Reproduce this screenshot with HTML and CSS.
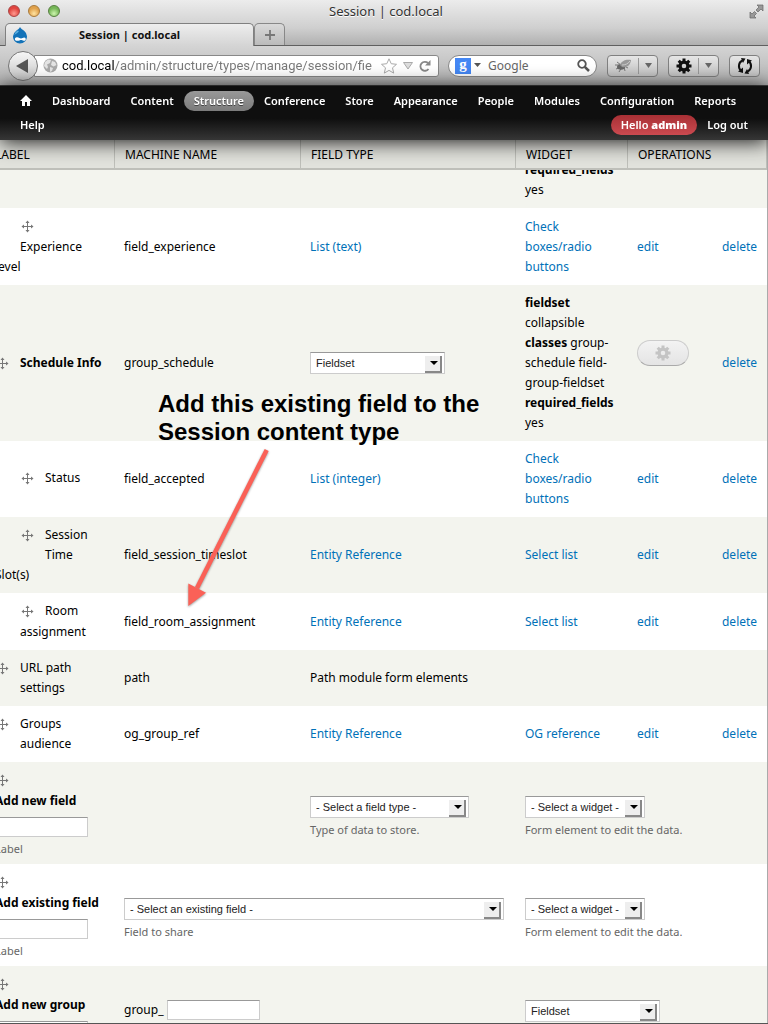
FILE: index.html
```html
<!DOCTYPE html>
<html lang="en">
<head>
<meta charset="utf-8">
<title>Session | cod.local</title>
<link rel="stylesheet" href="styles.css">
</head>
<body>
<svg class="defs" width="0" height="0" aria-hidden="true">
  <symbol id="move" viewBox="0 0 13 13"><path d="M6.5 1v11M1 6.5h11" stroke="#777" fill="none"/><path d="M4.5 3 6.500 .5 8.500 3zM4.500 10 6.500 12.500 8.500 10zM3 4.500.5 6.500 3 8.500zM10 4.500 12.500 6.500 10 8.500z" fill="#777"/></symbol>
  <symbol id="gear" viewBox="0 0 16 16"><g fill="currentColor"><path fill-rule="evenodd" d="M8 2.500a5.500 5.500 0 1 0 0 11 5.500 5.500 0 0 0 0-11zm0 3.200a2.300 2.300 0 1 1 0 4.600 2.300 2.300 0 0 1 0-4.600z"/><path d="M6.500.5h3V4h-3zM6.500 12h3v3.500h-3zM.5 6.500H4v3H.5zM12 6.500h3.500v3H12z"/><path transform="rotate(45 8 8)" d="M6.500.5h3V4h-3zM6.500 12h3v3.500h-3zM.5 6.500H4v3H.5zM12 6.500h3.500v3H12z"/></g></symbol>
</svg>
<div class="window">
  <header class="chrome">
    <div class="titlebar">
      <div class="lights"><button class="light red" aria-label="Close"></button><button class="light amber" aria-label="Minimize"></button><button class="light green" aria-label="Zoom"></button></div>
      <div class="window-title">Session | cod.local</div>
      <button class="plain fullscreen" aria-label="Full screen"><svg width="15" height="15" viewBox="0 0 15 15"><path d="M8 1h6v6l-2-2-3 3-2-2 3-3zM1 8l2 2 2.500-2.500 2 2L5 12l2 2H1z" fill="#999" stroke="#666" stroke-width=".7"/></svg></button>
    </div>
    <div class="tabs">
      <div class="tab"><svg width="16" height="17" viewBox="0 0 16 17"><path d="M8 0c1 2 2.700 2.500 4.300 4A7 7 0 0 1 15 9.300c0 4.200-3.200 7.200-7 7.200s-7-3-7-7.200A7 7 0 0 1 4 4c1.500-1.300 3.200-2 4-4z" fill="#1272b8"/><path d="M5.500 3.500C4 5 2.500 6 2.500 8c1.500-1.500 3.500-2 4.500-4z" fill="#5aaee0"/><path d="M4.800 13.800c-2.300 0-2.800-3.300 0-3.600 2-.2 3 1.300 4.200 1.300 1.300 0 2-1 3.200-1 2.200.2 2 3.300.2 3.300-1.200 0-1.900-.9-3-.8-1.400 0-2.200.8-4.600.8z" fill="#fff"/></svg><span class="tab-title">Session | cod.local</span></div>
      <button class="new-tab" aria-label="New tab"><svg width="10" height="10"><path d="M5 0v10M0 5h10" stroke="#777" stroke-width="1.800"/></svg></button>
    </div>
    <div class="navbar">
      <button class="back" aria-label="Back"><svg width="12" height="14"><path d="M12 0v14L0 7z" fill="#555"/></svg></button>
      <div class="location">
        <svg width="15" height="15" viewBox="0 0 15 15"><circle cx="7.500" cy="7.500" r="7" fill="#aaa"/><path d="M2 4 5 1.500 8 2 7 5 4 6.500 5 9l-1 2-3-3zM9 3l3 1 1.500 3-3 1.500L8 7zM7 9l3 1-1 3-2 1z" fill="#e4e4e4"/></svg>
        <input class="url" type="text" aria-label="Address" value="cod.local/admin/structure/types/manage/session/fie">
        <button class="plain" aria-label="Bookmark"><svg width="16" height="16" viewBox="0 0 16 16"><path d="m8 .8 2.200 4.900 5.300.6-4 3.500 1.200 5.300L8 12.400l-4.700 2.700 1.200-5.300-4-3.500 5.300-.6z" fill="#fff" stroke="#aaa"/></svg></button>
        <button class="plain" aria-label="History"><svg width="10" height="8"><path d="M.5.5h9L5 7z" fill="#ddd" stroke="#aaa"/></svg></button>
        <button class="plain" aria-label="Reload"><svg width="12" height="12" viewBox="0 0 12 12"><path d="M9.500 9A4.500 4.500 0 1 1 9 3" stroke="#888" stroke-width="1.800" fill="none"/><path d="M11.500 0v5.500H6z" fill="#888"/></svg></button>
      </div>
      <div class="search">
        <span class="engine">g</span><svg width="7" height="5"><path d="M0 0h7L3.500 4z" fill="#555"/></svg>
        <input type="text" placeholder="Google" aria-label="Search">
        <button class="plain" aria-label="Search"><svg width="13" height="13" viewBox="0 0 13 13"><circle cx="5" cy="5" r="3.800" fill="none" stroke="#555" stroke-width="1.800"/><path d="m7.800 7.800 4.200 4.200" stroke="#555" stroke-width="2.500"/></svg></button>
      </div>
      <button class="tool split" aria-label="Firebug"><svg width="18" height="16" viewBox="0 0 18 16"><path d="M1 7h5M3 4l4 3M2 11l5-2M5 14l3-5M11 13l-1-4M14 10l-4-2" stroke="#777" fill="none"/><ellipse cx="7" cy="9" rx="4" ry="2.700" fill="#666"/><path d="M6 7c1-4 6-6 11-5-.5 5-4 8-9 7z" fill="#999"/><path d="M8 7c3 0 6-1 8-4" stroke="#ccc" fill="none"/></svg><i></i><svg width="7" height="5"><path d="M0 0h7L3.500 5z" fill="#666"/></svg></button>
      <button class="tool split" aria-label="Tools"><svg width="16" height="16"><use href="#gear"/></svg><i></i><svg width="7" height="5"><path d="M0 0h7L3.500 5z" fill="#666"/></svg></button>
      <button class="tool" aria-label="Sync"><svg width="16" height="16" viewBox="0 0 16 16"><path d="M5.500 2.500A6 6 0 0 0 4 12.500M10.500 13.500A6 6 0 0 0 12 3.500" fill="none" stroke="#111" stroke-width="2"/><path d="M4 0l4.500.5L6 5zM12 16l-4.500-.5L10 11zM1 13.500l5 1.500V9.500zM15 2.500 10 1v5.500z" fill="#111"/></svg></button>
    </div>
  </header>
  <nav class="admin">
    <a href="#" aria-label="Home"><svg width="12" height="11" viewBox="0 0 12 11"><path d="M6 0 12 6h-2v5H7V7H5v4H2V6H0z" fill="#fff"/></svg></a>
    <a href="#">Dashboard</a><a href="#">Content</a><a href="#" class="active">Structure</a><a href="#">Conference</a><a href="#">Store</a><a href="#">Appearance</a><a href="#">People</a><a href="#">Modules</a><a href="#">Configuration</a><a href="#">Reports</a><a href="#">Help</a>
    <a href="#" class="account">Hello <strong>admin</strong></a><a href="#">Log out</a>
  </nav>
  <main class="view">
    <table class="fields">
      <colgroup><col class="c-label"><col class="c-name"><col class="c-type"><col class="c-widget"><col class="c-edit"><col class="c-delete"></colgroup>
      <thead><tr><th>LABEL</th><th>MACHINE NAME</th><th>FIELD TYPE</th><th>WIDGET</th><th colspan="2">OPERATIONS</th></tr></thead>
      <tbody>
        <tr><td></td><td></td><td></td><td><b>required_fields</b><br>yes</td><td></td><td></td></tr>
        <tr><td><span class="indent"></span><span class="handle"><svg width="13" height="13"><use href="#move"/></svg></span>Experience level</td><td>field_experience</td><td><a href="#">List (text)</a></td><td><a href="#">Check boxes/radio buttons</a></td><td><a href="#">edit</a></td><td><a href="#">delete</a></td></tr>
        <tr><td><span class="handle"><svg width="13" height="13"><use href="#move"/></svg></span><b class="keep">Schedule Info</b></td><td>group_schedule</td><td><span class="select medium"><select aria-label="Schedule Info format"><option>Fieldset</option></select></span></td><td><b>fieldset</b> collapsible<br><b>classes</b> group-<br>schedule field-<br>group-fieldset <b>required_fields</b> yes</td><td><button class="settings" aria-label="Settings"><svg width="16" height="16"><use href="#gear"/></svg></button></td><td><a href="#">delete</a></td></tr>
        <tr><td><span class="indent"></span><span class="handle"><svg width="13" height="13"><use href="#move"/></svg></span>Status</td><td>field_accepted</td><td><a href="#">List (integer)</a></td><td><a href="#">Check boxes/radio buttons</a></td><td><a href="#">edit</a></td><td><a href="#">delete</a></td></tr>
        <tr><td><span class="indent"></span><span class="handle"><svg width="13" height="13"><use href="#move"/></svg></span>Session Time<br>Slot(s)</td><td>field_session_timeslot</td><td><a href="#">Entity Reference</a></td><td><a href="#">Select list</a></td><td><a href="#">edit</a></td><td><a href="#">delete</a></td></tr>
        <tr><td><span class="indent"></span><span class="handle"><svg width="13" height="13"><use href="#move"/></svg></span>Room assignment</td><td>field_room_assignment</td><td><a href="#">Entity Reference</a></td><td><a href="#">Select list</a></td><td><a href="#">edit</a></td><td><a href="#">delete</a></td></tr>
        <tr><td><span class="handle"><svg width="13" height="13"><use href="#move"/></svg></span>URL path<br>settings</td><td>path</td><td>Path module form elements</td><td></td><td></td><td></td></tr>
        <tr><td><span class="handle"><svg width="13" height="13"><use href="#move"/></svg></span>Groups<br>audience</td><td>og_group_ref</td><td><a href="#">Entity Reference</a></td><td><a href="#">OG reference</a></td><td><a href="#">edit</a></td><td><a href="#">delete</a></td></tr>
        <tr class="add"><td><span class="handle"><svg width="13" height="13"><use href="#move"/></svg></span><label for="new-field">Add new field</label><input id="new-field" type="text"><small>Label</small></td><td></td><td><span class="select wide"><select aria-label="Field type"><option>- Select a field type -</option></select></span><small>Type of data to store.</small></td><td colspan="3"><span class="select narrow"><select aria-label="Widget"><option>- Select a widget -</option></select></span><small>Form element to edit the data.</small></td></tr>
        <tr class="add"><td><span class="handle"><svg width="13" height="13"><use href="#move"/></svg></span><label for="old-field">Add existing field</label><input id="old-field" type="text"><small>Label</small></td><td colspan="2"><span class="select full"><select aria-label="Existing field"><option>- Select an existing field -</option></select></span><small>Field to share</small></td><td colspan="3"><span class="select narrow"><select aria-label="Widget for existing field"><option>- Select a widget -</option></select></span><small>Form element to edit the data.</small></td></tr>
        <tr class="add"><td><span class="handle"><svg width="13" height="13"><use href="#move"/></svg></span><label for="new-group">Add new group</label><input id="new-group" type="text"><small>Label</small></td><td><span class="prefix">group_ <input type="text" aria-label="Group name"></span></td><td></td><td colspan="3"><span class="select medium"><select aria-label="Group format"><option>Fieldset</option></select></span></td></tr>
      </tbody>
    </table>
    <p class="note">Add this existing field to the<br>Session content type</p>
    <svg class="arrow" width="90" height="166" viewBox="184 446 90 166"><path d="M266.700 450 197 588" stroke="#fa6157" stroke-width="4.500"/><path d="M188.300 583.500 206 592.700 188.300 606z" fill="#fa6157"/></svg>
  </main>
</div>
</body>
</html>
```
FILE: styles.css
```css
* { box-sizing: border-box; }
body { margin: 0; font: 12px/20px "Noto Sans", "Open Sans", sans-serif; color: #000; }
button, input, select { font: inherit; margin: 0; padding: 0; border: 0; border-radius: 0; color: inherit; }
svg { display: block; flex: none; }
.defs { position: absolute; }
a { color: #0071b8; text-decoration: none; }
.plain { background: none; }
.window { height: 100vh; display: flex; flex-direction: column; overflow: hidden; border-bottom: 1px solid #555; background: #fff; }

.chrome { background: linear-gradient(#ececec 0, #cfcfcf 28px, #b0b0b0 45px, #d4d4d4 46px, #b2b2b2 100%); border-bottom: 1px solid #444; }
.titlebar { display: grid; grid-template-columns: 1fr auto 1fr; align-items: center; height: 22px; padding: 0 4px 0 8px; }
.lights { display: flex; gap: 8px; }
.light { width: 12px; height: 12px; border-radius: 50%; border: 1px solid #777; }
.red { background: radial-gradient(circle at 50% 75%, #ff9a90, #e0443e 60%); border-color: #a44; }
.amber { background: radial-gradient(circle at 50% 75%, #ffe3a0, #e0a04a 60%); border-color: #a8793a; }
.green { background: radial-gradient(circle at 50% 75%, #cdf5ae, #75b657 60%); border-color: #567f40; }
.window-title { font-size: 13px; color: #333; text-shadow: 0 1px #fff; }
.fullscreen { justify-self: end; }
.tabs { display: flex; align-items: flex-end; height: 24px; border-bottom: 1px solid #606060; padding-left: 5px; }
.tab { display: flex; align-items: center; width: 249px; height: 23px; margin-bottom: -1px; padding-left: 6px; border: 1px solid #808080; border-bottom: 0; border-radius: 5px 5px 0 0; background: linear-gradient(#eee, #d4d4d4); }
.tab-title { flex: 1; padding-right: 22px; text-align: center; font-size: 11px; font-weight: 700; color: #111; }
.new-tab { width: 31px; height: 22px; display: grid; place-items: center; border: 1px solid #888; border-bottom: 0; border-radius: 5px 5px 0 0; background: linear-gradient(#d9d9d9, #bbb); }
.navbar { display: flex; align-items: center; height: 39px; padding: 0 8px; }
.back { position: relative; z-index: 1; flex: none; width: 30px; height: 30px; padding-right: 3px; display: grid; place-items: center; border: 1px solid #777; border-radius: 50%; background: linear-gradient(#f6f6f6, #c8c8c8); }
.location { flex: 1; min-width: 0; display: flex; align-items: center; gap: 4px; height: 22px; margin: 0 9px 0 -4px; padding: 0 7px 0 8px; background: #fff; border: 1px solid #888; border-radius: 0 3px 3px 0; }
.location .plain + .plain { margin-left: 2px; }
.url { flex: 1; min-width: 0; font: 13px/18px Roboto, "Noto Sans", sans-serif; color: transparent; background: linear-gradient(90deg, #000 52px, #777 52px); -webkit-background-clip: text; background-clip: text; outline: 0; }
.search { flex: none; display: flex; align-items: center; gap: 3px; width: 149px; height: 22px; padding: 0 6px; border: 1px solid #888; border-radius: 11px; background: #fff; }
.search input { flex: 1; min-width: 0; padding-left: 4px; font-size: 12px; background: none; }
.search input::placeholder { color: #666; }
.engine { width: 16px; height: 16px; background: #4487f4; color: #fff; text-align: center; font: bold 15px/13px "Liberation Serif", serif; }
.tool { flex: none; display: flex; align-items: center; justify-content: center; width: 31px; height: 22px; margin-left: 10px; border: 1px solid #808080; border-radius: 4px; background: linear-gradient(#e6e6e6, #c2c2c2); color: #111; }
.split { width: 51px; gap: 6px; }
.tool i { width: 1px; height: 16px; background: #999; }

.admin { position: relative; z-index: 3; display: flex; flex-wrap: wrap; align-items: center; row-gap: 4px; padding: 5px 10px; background: linear-gradient(#0f0f0f 60%, #363636); box-shadow: 0 2px 20px rgba(0, 0, 0, .9); }
.admin a { display: block; height: 20px; padding: 0 10px; border-radius: 10px; color: #fff; font-size: 11px; line-height: 20px; font-weight: 600; }
.admin a:first-child { padding: 4px 10px; }
.admin .active { background: linear-gradient(#999, #7b7b7b); text-shadow: 0 1px #444; }
.admin .account { margin-left: auto; background: linear-gradient(#a83035, #cb4a50); }

.view { position: relative; flex: 1; min-height: 0; overflow: hidden; }
.fields { table-layout: fixed; width: calc(100% + 15px); margin: -18px 0 0 -15px; border-spacing: 0; border-right: 1px solid #aaa; }
.c-label { width: 130px; } .c-name { width: 186px; } .c-type { width: 215px; } .c-widget { width: 112px; } .c-delete { width: 54px; }
.fields th { position: sticky; top: 0; z-index: 2; height: 30px; padding: 2px 10px 0; text-align: left; font-weight: 400; background: #e1e2dc; border-right: 1px solid #bebfb9; border-bottom: 2px solid #bebfb9; }
.fields td { padding: 8px; vertical-align: middle; }
.fields td + td { padding-left: 9px; }
.fields td:first-child { padding-left: 10px; padding-right: 10px; }
.fields tbody tr:nth-child(odd) { background: #f3f4ee; }
.keep { white-space: nowrap; }
.fields b, .fields label { font-weight: 700; }
.indent { float: left; width: 25px; height: 22px; }
.handle { float: left; width: 25px; height: 21px; padding: 4px 1px; }
.add label { display: block; clear: left; white-space: nowrap; }
.fields .add td { vertical-align: top; padding-top: 34px; padding-bottom: 5px; }
.fields .add td:first-child { padding-top: 8px; }
.add input { width: 93px; height: 20px; background: #fff; border: 1px solid #ccc; border-top-color: #999; }
.add label + input { display: block; margin-top: 6px; }
.fields small { display: block; font-size: 11px; line-height: 20px; margin-top: 2px; color: #666; }
.prefix { display: flex; align-items: center; gap: 4px; }
.select { position: relative; display: block; height: 22px; }
.select select { appearance: none; display: block; width: 100%; height: 22px; padding: 0 22px 0 5px; font: 11px/20px "Liberation Sans", Arial, sans-serif; color: #222; background: #fff; border: 1px solid #ccc; border-top-color: #999; }
.select::before { content: ""; position: absolute; right: 3px; top: 4px; width: 15px; height: 15px; background: #eee; border-right: 2px solid #888; border-bottom: 2px solid #888; pointer-events: none; }
.select::after { content: ""; position: absolute; right: 7px; top: 9px; border: 4px solid transparent; border-top-color: #000; border-bottom: 0; pointer-events: none; }
.medium { width: 135px; } .wide { width: 159px; } .narrow { width: 120px; } .full { width: 380px; }
.settings { display: grid; place-items: center; width: 52px; height: 26px; margin-bottom: 20px; color: #c4c4c4; border: 1px solid #ccc; border-bottom-color: #aaa; border-radius: 13px; background: linear-gradient(#f3f3f3, #e4e4e4); }

.note { position: absolute; left: 158px; top: 250px; margin: 0; font: bold 24px/28px "Liberation Sans", Arial, sans-serif; pointer-events: none; }
.arrow { position: absolute; left: 184px; top: 306px; pointer-events: none; filter: drop-shadow(0 1px 1px rgba(0, 0, 0, .4)); }
```
